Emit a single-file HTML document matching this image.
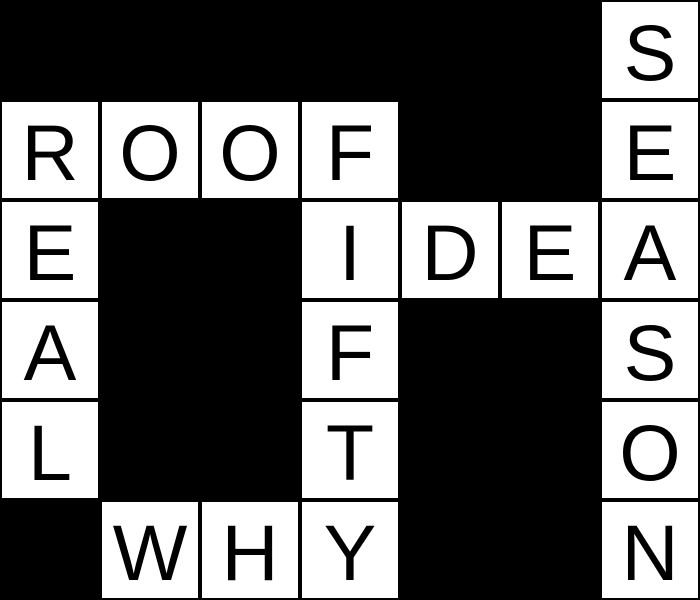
<!DOCTYPE html>
<html><head><style>
html,body{margin:0;padding:0;background:#000;}
#g{position:relative;width:700px;height:600px;background:#000;overflow:hidden;}
.c{position:absolute;width:96px;height:96px;background:#fff;display:flex;align-items:center;justify-content:center;font-family:"Liberation Sans",sans-serif;font-size:79px;color:#000;line-height:1;}
.c span{position:relative;top:2px;}
</style></head><body><div id="g">
<div class="c" style="left:602px;top:2px"><span>S</span></div>
<div class="c" style="left:2px;top:102px"><span>R</span></div>
<div class="c" style="left:102px;top:102px"><span>O</span></div>
<div class="c" style="left:202px;top:102px"><span>O</span></div>
<div class="c" style="left:302px;top:102px"><span>F</span></div>
<div class="c" style="left:602px;top:102px"><span>E</span></div>
<div class="c" style="left:2px;top:202px"><span>E</span></div>
<div class="c" style="left:302px;top:202px"><span>I</span></div>
<div class="c" style="left:402px;top:202px"><span>D</span></div>
<div class="c" style="left:502px;top:202px"><span>E</span></div>
<div class="c" style="left:602px;top:202px"><span>A</span></div>
<div class="c" style="left:2px;top:302px"><span>A</span></div>
<div class="c" style="left:302px;top:302px"><span>F</span></div>
<div class="c" style="left:602px;top:302px"><span>S</span></div>
<div class="c" style="left:2px;top:402px"><span>L</span></div>
<div class="c" style="left:302px;top:402px"><span>T</span></div>
<div class="c" style="left:602px;top:402px"><span>O</span></div>
<div class="c" style="left:102px;top:502px"><span>W</span></div>
<div class="c" style="left:202px;top:502px"><span>H</span></div>
<div class="c" style="left:302px;top:502px"><span>Y</span></div>
<div class="c" style="left:602px;top:502px"><span>N</span></div>
</div></body></html>
